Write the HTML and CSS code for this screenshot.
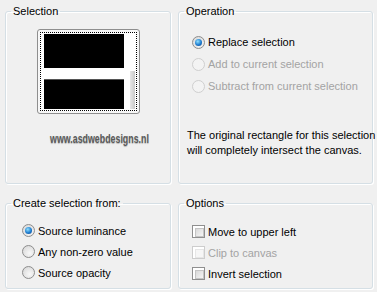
FILE: index.html
```html
<!DOCTYPE html>
<html lang="en">
     <head>
          <meta charset="UTF-8" />
          <title>Selection from mask</title>
          <link rel="stylesheet" href="styles.css">
     </head>
     <body>
          <div class="dialog">
               <fieldset class="group">
                    <legend>Selection</legend>
                    <div class="preview">
                         <div class="canvas">
                              <div class="shape">
                                   <div class="block"></div>
                                   <div class="band"></div>
                                   <div class="block lower"></div>
                              </div>
                              <div class="edge"></div>
                         </div>
                    </div>
                    <p class="mark">www.asdwebdesigns.nl</p>
               </fieldset>

               <fieldset class="group">
                    <legend>Operation</legend>
                    <ul class="choices op">
                         <li><span class="radio on"></span>Replace selection</li>
                         <li class="off"><span class="radio"></span>Add to current selection</li>
                         <li class="off"><span class="radio"></span>Subtract from current selection</li>
                    </ul>
                    <p class="note">The original rectangle for this selection<br>will completely intersect the canvas.</p>
               </fieldset>

               <fieldset class="group">
                    <legend>Create selection from:</legend>
                    <ul class="choices src">
                         <li><span class="radio on"></span>Source luminance</li>
                         <li><span class="radio"></span>Any non-zero value</li>
                         <li><span class="radio"></span>Source opacity</li>
                    </ul>
               </fieldset>

               <fieldset class="group">
                    <legend>Options</legend>
                    <ul class="choices opt">
                         <li><span class="check"></span>Move to upper left</li>
                         <li class="off"><span class="check"></span>Clip to canvas</li>
                         <li><span class="check"></span>Invert selection</li>
                    </ul>
               </fieldset>
          </div>
     </body>
</html>
```

FILE: styles.css
```css
* {
     padding: 0;
     margin: 0;
     box-sizing: border-box;
}
body {
     background-color: #f0f0f0;
     font-family: "Liberation Sans", Arial, sans-serif;
     font-size: 11px;
     color: #000;
     width: 377px;
     height: 292px;
     overflow: hidden;
}
.dialog {
     display: grid;
     grid-template-columns: 166px 195px;
     grid-template-rows: 180px 93px;
     column-gap: 7px;
     row-gap: 12px;
     padding: 4px 0 0 5px;
}
.group {
     border: 1px solid #d5dfe5;
     border-radius: 3px;
     box-shadow: inset 1px 1px 0 #fff, 1px 1px 0 #fff;
     min-width: 0;
}
.group legend {
     margin-left: 5px;
     padding: 0 2px;
     line-height: 14px;
     font-size: 11px;
}

/* preview */
.preview {
     width: 103px;
     height: 85px;
     margin: 11px auto 0;
     border: 1px solid #8e8e8e;
     border-radius: 3px;
     padding: 2px;
     background-color: #f7f7f7;
}
.canvas {
     height: 100%;
     border: 1px dotted #000;
     background-color: #fff;
     display: flex;
     padding: 1px 0 1px 3px;
}
.shape {
     width: 80px;
     display: flex;
     flex-direction: column;
}
.block {
     height: 34px;
     background-color: #000;
}
.band {
     height: 11px;
     background-color: #fff;
}
.block.lower {
     flex: 1;
     border-top: 1px solid #555;
}
.edge {
     width: 5px;
     margin: 37px 0 0 6px;
     background: linear-gradient(to right, #e6e6e6, #c8c8c8);
}
.mark {
     margin: 17px 0 0 44px;
     font-size: 13px;
     font-weight: bold;
     color: #5a5a5a;
     text-shadow: 0 1px 1px #b8b8b8;
     white-space: nowrap;
     transform: scaleX(0.68);
     transform-origin: left center;
}

/* choices */
.choices {
     list-style-type: none;
}
.choices li {
     display: flex;
     align-items: center;
     gap: 3px;
     height: 21px;
     white-space: nowrap;
}
.choices li.off {
     color: #a3a3a3;
}
.op {
     margin-top: 13px;
     padding-left: 13px;
}
.op li {
     height: 22px;
}
.src {
     margin-top: 10px;
     padding-left: 16px;
}
.opt {
     margin-top: 11px;
     padding-left: 13px;
}
.radio {
     width: 13px;
     height: 13px;
     border-radius: 50%;
     border: 1px solid #8d8d8d;
     background: radial-gradient(circle at 60% 65%, #f8f8f8, #d4d4d4);
     display: flex;
     align-items: center;
     justify-content: center;
     flex-shrink: 0;
}
.radio.on::after {
     content: "";
     width: 7px;
     height: 7px;
     border-radius: 50%;
     background: radial-gradient(circle at 40% 35%, #8fe0ff, #1d7ccf 55%, #0d3f86);
}
.off .radio {
     border-color: #cfcfcf;
     background: #f3f3f3;
}
.check {
     width: 13px;
     height: 13px;
     border: 1px solid #8f8f8f;
     background-color: #fff;
     padding: 2px;
     flex-shrink: 0;
}
.check::after {
     content: "";
     display: block;
     width: 100%;
     height: 100%;
     border: 1px solid #c4c4c4;
     background: linear-gradient(135deg, #d9d9d9, #f5f5f5);
}
.off .check {
     border-color: #cdcdcd;
}
.off .check::after {
     border-color: #e6e6e6;
     background: #f6f6f6;
}
.note {
     margin: 31px 0 0 8px;
     line-height: 15px;
     white-space: nowrap;
}
```
